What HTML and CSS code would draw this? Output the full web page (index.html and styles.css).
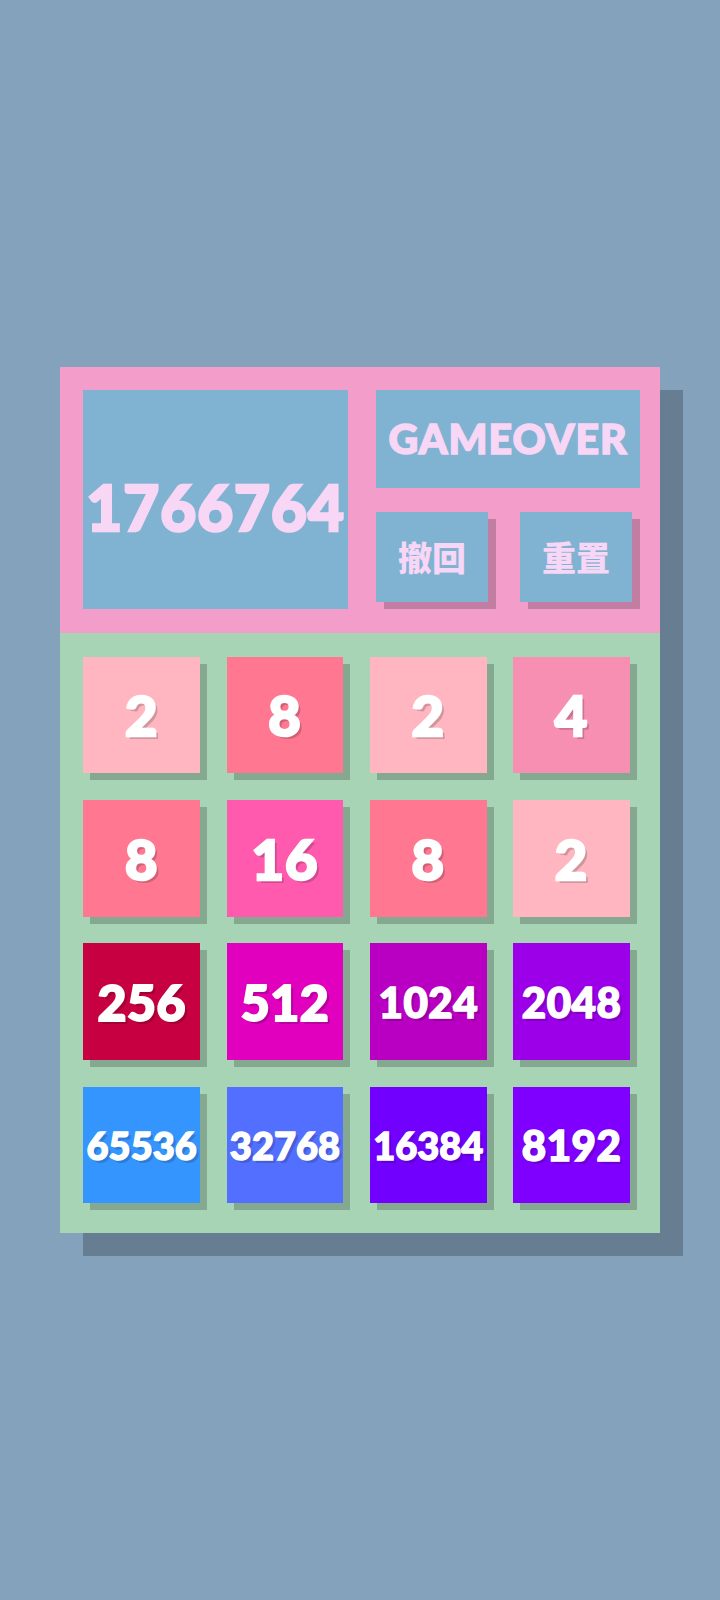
FILE: index.html
```html
<!DOCTYPE html>
<html lang="zh">
<head>
<meta charset="utf-8">
<title>2048</title>
<link rel="stylesheet" href="styles.css">
</head>
<body>
<main class="page">
  <section class="board">
    <header class="panel">
      <div class="score">1766764</div>
      <div class="side">
        <div class="status">GAMEOVER</div>
        <div class="actions">
          <button class="btn">撤回</button>
          <button class="btn">重置</button>
        </div>
      </div>
    </header>
    <div class="grid">
      <div class="tile t2">2</div>
      <div class="tile t8">8</div>
      <div class="tile t2">2</div>
      <div class="tile t4">4</div>
      <div class="tile t8">8</div>
      <div class="tile t16">16</div>
      <div class="tile t8">8</div>
      <div class="tile t2">2</div>
      <div class="tile t256 d3">256</div>
      <div class="tile t512 d3">512</div>
      <div class="tile t1024 d4">1024</div>
      <div class="tile t2048 d4">2048</div>
      <div class="tile t65536 d5">65536</div>
      <div class="tile t32768 d5">32768</div>
      <div class="tile t16384 d5">16384</div>
      <div class="tile t8192 d4">8192</div>
    </div>
  </section>
</main>
</body>
</html>
```
FILE: styles.css
```css
html, body {
  margin: 0;
  padding: 0;
}
body {
  background: #84a2bb;
  font-family: "Lato", "Noto Sans CJK SC", sans-serif;
  width: 720px;
  height: 1600px;
  overflow: hidden;
}
.page {
  padding-top: 366.67px;
}
.board {
  width: 600px;
  margin: 0 auto;
  box-shadow: 23px 23px 0 rgba(0, 0, 0, 0.22);
}
.panel {
  background: #f39dcb;
  height: 266.67px;
  box-sizing: border-box;
  padding: 23.33px 20px 24px 23.33px;
  display: flex;
  gap: 28px;
}
.score {
  width: 264.67px;
  background: #80b3d1;
  color: #f8d6f6;
  font-weight: 900;
  font-size: 62px;
  letter-spacing: 1px;
  -webkit-text-stroke: 2.5px #f8d6f6;
  display: flex;
  align-items: center;
  justify-content: center;
  padding-top: 14px;
  box-sizing: border-box;
}
.side {
  flex: 1;
  display: flex;
  flex-direction: column;
  gap: 24px;
}
.status {
  height: 98px;
  background: #80b3d1;
  color: #f8d6f6;
  font-weight: 900;
  font-size: 41px;
  letter-spacing: 1px;
  -webkit-text-stroke: 1.5px #f8d6f6;
  display: flex;
  align-items: center;
  justify-content: center;
}
.actions {
  display: flex;
  gap: 32px;
  padding-right: 8px;
}
.btn {
  flex: 1;
  height: 90px;
  border: 0;
  padding: 0;
  background: #80b3d1;
  color: #f8d6f6;
  font-family: "Noto Sans CJK SC", sans-serif;
  font-weight: 900;
  font-size: 34px;
  box-shadow: 8px 7px 0 rgba(0, 0, 0, 0.2);
}
.grid {
  background: #a6d4b5;
  height: 600px;
  box-sizing: border-box;
  padding: 23.33px 30px 30px 23.33px;
  display: grid;
  grid-template-columns: repeat(4, 116.67px);
  grid-template-rows: repeat(4, 116.67px);
  gap: 26.67px;
}
.tile {
  display: flex;
  align-items: center;
  justify-content: center;
  color: #fff;
  font-weight: 900;
  font-size: 56px;
  letter-spacing: 1px;
  -webkit-text-stroke: 2.5px #fff;
  box-shadow: 7px 7px 0 rgba(0, 0, 0, 0.2);
  text-shadow: 3px 3px 0 rgba(0, 0, 0, 0.18);
}
.d3 { font-size: 50px; -webkit-text-stroke: 2px #fff; letter-spacing: 0.5px; }
.d4 { font-size: 42px; -webkit-text-stroke: 1.6px #fff; letter-spacing: 0.5px; }
.d5 { font-size: 38px; -webkit-text-stroke: 1.4px #fff; letter-spacing: 0; }
.t2 { background: #ffb6c1; }
.t4 { background: #f68fb2; }
.t8 { background: #ff7791; }
.t16 { background: #ff5aae; }
.t256 { background: #c70041; }
.t512 { background: #e200bf; }
.t1024 { background: #b900c2; }
.t2048 { background: #9b00e8; }
.t65536 { background: #3495ff; }
.t32768 { background: #526fff; }
.t16384 { background: #7200ff; }
.t8192 { background: #8000ff; }
```
